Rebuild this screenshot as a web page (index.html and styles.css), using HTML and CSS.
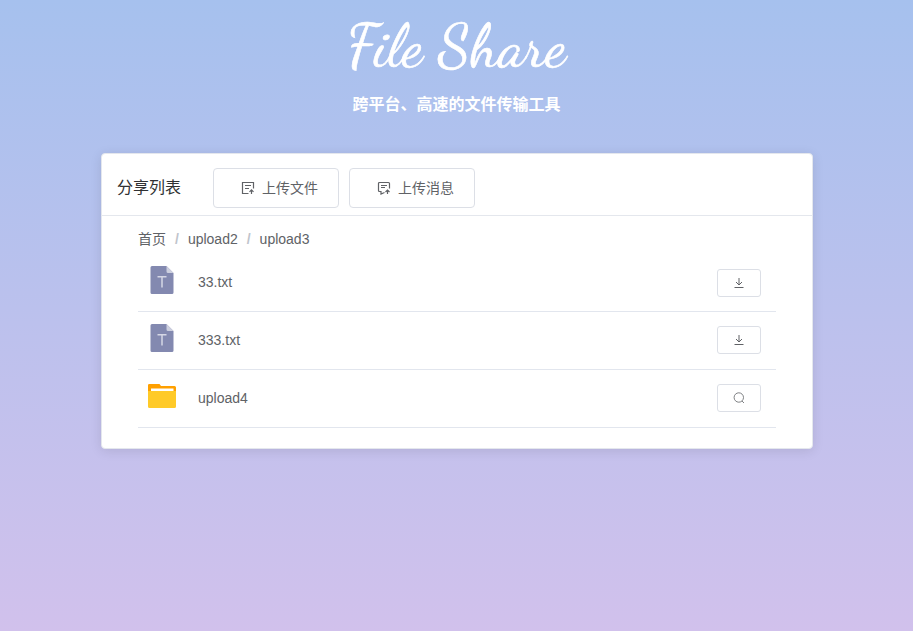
FILE: index.html
```html
<!DOCTYPE html>
<html lang="zh-CN">
<head>
<meta charset="utf-8">
<title>File Share</title>
<link rel="stylesheet" href="styles.css">
</head>
<body>
<header class="hero">
  <h1 class="brand">File Share</h1>
  <p class="tagline">跨平台、高速的文件传输工具</p>
</header>
<main class="card">
  <div class="card-header">
    <span class="card-title">分享列表</span>
    <button class="btn">
      <svg class="btn-icon" viewBox="0 0 14 14"><path d="M7.500 12.500h-6v-11h11v6M4 4.500h6M4 7.500h4M10.500 13V9M8.500 10.800l2-2 2 2"/></svg>
      <span>上传文件</span>
    </button>
    <button class="btn">
      <svg class="btn-icon" viewBox="0 0 14 14"><path d="M7.500 11.500l-3.500 1.500v-2.500H2.500a1 1 0 0 1-1-1v-7a1 1 0 0 1 1-1h9a1 1 0 0 1 1 1V7.500M4 4.500h6M4 6.500h4M10.500 13V9.500M8.500 11l2-2 2 2"/></svg>
      <span>上传消息</span>
    </button>
  </div>
  <div class="card-body">
    <nav class="crumbs"><a>首页</a><span class="sep">/</span><a>upload2</a><span class="sep">/</span><a>upload3</a></nav>
    <ul class="files">
      <li class="file">
        <svg class="file-icon" viewBox="0 0 28 28"><path fill="#8389b0" d="M4 0H18.500l7 7v19.500a1.500 1.500 0 0 1-1.500 1.500h-20A1.500 1.500 0 0 1 2.500 26.500v-25A1.500 1.500 0 0 1 4 0z"/><path fill="#cdd0df" d="M18.500 0l7 7h-5.500A1.500 1.500 0 0 1 18.500 5.500z"/><path fill="none" stroke="#d5d7e5" stroke-width="1.500" d="M9.500 10.800h9M14 10.800V21.500"/></svg>
        <span class="file-name">33.txt</span>
        <button class="action"><svg viewBox="0 0 12 12"><path d="M6 1v7M3 5l3 3 3-3M1.500 10.500h9"/></svg></button>
      </li>
      <li class="file raised">
        <svg class="file-icon" viewBox="0 0 28 28"><path fill="#8389b0" d="M4 0H18.500l7 7v19.500a1.500 1.500 0 0 1-1.500 1.500h-20A1.500 1.500 0 0 1 2.500 26.500v-25A1.500 1.500 0 0 1 4 0z"/><path fill="#cdd0df" d="M18.500 0l7 7h-5.500A1.500 1.500 0 0 1 18.500 5.500z"/><path fill="none" stroke="#d5d7e5" stroke-width="1.500" d="M9.500 10.800h9M14 10.800V21.500"/></svg>
        <span class="file-name">333.txt</span>
        <button class="action"><svg viewBox="0 0 12 12"><path d="M6 1v7M3 5l3 3 3-3M1.500 10.500h9"/></svg></button>
      </li>
      <li class="file raised">
        <svg class="file-icon" viewBox="0 0 28 28"><path fill="#ffa000" d="M1.200 2h10.300l1.500 2h13.500A1.500 1.500 0 0 1 28 5.500V12H0V3.200A1.200 1.200 0 0 1 1.200 2z"/><path fill="#fff" d="M3 6.500h22.500v4H3z"/><path fill="#ffca28" d="M0 9h28v15.500a1.500 1.500 0 0 1-1.500 1.500h-25A1.500 1.500 0 0 1 0 24.500z"/></svg>
        <span class="file-name">upload4</span>
        <button class="action"><svg class="search" viewBox="0 0 12 12"><circle cx="5.800" cy="5.500" r="4.700"/><path d="M9 9l2 2"/></svg></button>
      </li>
    </ul>
  </div>
</main>
</body>
</html>
```

FILE: styles.css
```css
* { box-sizing: border-box; }
html { height: 100%; }
body {
  margin: 0;
  height: 100%;
  overflow: hidden;
  background: linear-gradient(#a6c1ee, #d1c1ec);
  font-family: "Liberation Sans", "Noto Sans CJK SC", sans-serif;
  font-size: 14px;
  color: #606266;
}
.hero {
  height: 153px;
  text-align: center;
  color: #fff;
}
.brand {
  margin: 0;
  padding-top: 12px;
  height: 93px;
  font: 400 60px/68px "Dancing Script", cursive;
  -webkit-text-stroke: 0.6px #fff;
  white-space: nowrap;
}
.tagline {
  margin: 0;
  font-size: 16px;
  line-height: 24px;
  font-weight: 700;
}
.card {
  width: 712px;
  height: 296px;
  margin: 0 auto 0 101px;
  background: #fff;
  border: 1px solid #e4e7ed;
  border-radius: 4px;
  box-shadow: 0 2px 12px rgba(0, 0, 0, .1);
}
.card-header {
  display: flex;
  align-items: center;
  height: 62px;
  padding: 7px 15px 0;
  border-bottom: 1px solid #e4e7ed;
}
.card-title {
  width: 96px;
  padding-bottom: 4px;
  font-size: 16px;
  color: #303133;
}
.btn {
  display: flex;
  align-items: center;
  justify-content: center;
  gap: 7px;
  width: 126px;
  height: 40px;
  margin-right: 10px;
  padding: 0;
  background: #fff;
  border: 1px solid #dcdfe6;
  border-radius: 4px;
  font: inherit;
  color: #606266;
}
.btn span { padding-bottom: 2px; }
.btn-icon {
  width: 14px;
  height: 14px;
  margin-left: 7px;
  fill: none;
  stroke: #606266;
  stroke-width: 1.200;
}
.card-body { padding: 13px 36px 0; }
.crumbs {
  display: flex;
  height: 20px;
  line-height: 20px;
}
.sep {
  margin: 0 9px;
  color: #c0c4cc;
  font-weight: 700;
}
.files {
  margin: 5px 0 0;
  padding: 0;
  list-style: none;
}
.file {
  display: flex;
  align-items: center;
  height: 58px;
  padding: 0 15px 0 10px;
  border-bottom: 1px solid #e2e6ee;
}
.file-icon {
  width: 28px;
  height: 28px;
  margin: 0 22px 5px 0;
}
.file-name {
  flex: 1;
  padding-bottom: 2px;
}
.action {
  display: flex;
  align-items: center;
  justify-content: center;
  width: 44px;
  height: 28px;
  padding: 0;
  background: #fff;
  border: 1px solid #dcdfe6;
  border-radius: 3px;
}
.raised .action { margin-bottom: 2px; }
.action svg {
  width: 12px;
  height: 12px;
  fill: none;
  stroke: #606266;
}
.action .search { stroke-width: .8; }
```
